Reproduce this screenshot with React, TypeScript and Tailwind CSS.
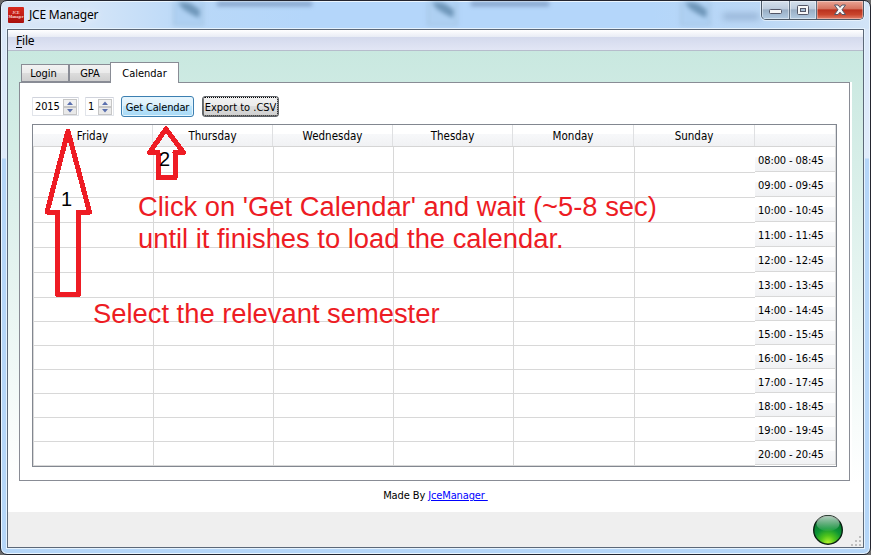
import type { ReactNode } from "react";

const DAYS: [string, string][] = [
  ["Friday", "w-[120px]"],
  ["Thursday", "w-[120px]"],
  ["Wednesday", "w-[120px]"],
  ["Thesday", "w-[120px]"],
  ["Monday", "w-[121px]"],
  ["Sunday", "w-[121px]"],
];

const HOURS = ["08", "09", "10", "11", "12", "13", "14", "15", "16", "17", "18", "19", "20"];

function rowHeight(index: number) {
  if (index === 0) return "h-[26px]";
  return index < 6 ? "h-[25px]" : "h-[24px]";
}

function AppIcon() {
  return (
    <svg width="16" height="16" viewBox="0 0 16 16" className="shrink-0">
      <defs>
        <linearGradient id="appRed" x1="0" y1="0" x2="0" y2="1">
          <stop offset="0" stopColor="#d8291c" />
          <stop offset="1" stopColor="#a80f0c" />
        </linearGradient>
      </defs>
      <rect width="16" height="16" rx="1" fill="url(#appRed)" />
      <text x="8" y="7" fontSize="4" textAnchor="middle" fill="#fbd9d4" fontFamily="Liberation Serif, serif" fontWeight="bold">JCE</text>
      <text x="8" y="11" fontSize="4" textAnchor="middle" fill="#fbd9d4" fontFamily="Liberation Serif, serif" fontWeight="bold" textLength="15">Manager</text>
    </svg>
  );
}

function BlurredFile({ className }: { className: string }) {
  return (
    <svg width="40" height="26" viewBox="0 0 40 26" className={`blur-[2px] ${className}`}>
      <rect x="4" y="-6" width="29" height="29" fill="#aed0f2" stroke="#9dbcd8" />
      <path d="M6 -2 L13 7 L21 12 L29 16 L30 8 L20 1 Z" fill="#6f97ba" />
    </svg>
  );
}

function WindowButtons() {
  return (
    <div className="absolute right-[6px] top-0 flex h-[19px] w-[103px] overflow-hidden rounded-b-[5px] border border-t-0 border-[#4c5967] shadow-[0_0_0_1px_rgba(255,255,255,0.5)]">
      <div className="flex w-[28px] items-center justify-center border-r border-[#5f6f80] bg-[linear-gradient(#d5e0ec_0%,#bccbdc_46%,#98adc3_48%,#b2cbe2_100%)] shadow-[inset_0_0_0_1px_rgba(255,255,255,0.45)]">
        <svg width="13" height="6" viewBox="0 0 13 6" className="relative top-[2px]">
          <rect x="0.5" y="0.5" width="12" height="4" rx="1" fill="#f7f7f7" stroke="#535666" />
        </svg>
      </div>
      <div className="flex w-[27px] items-center justify-center border-r border-[#5f6f80] bg-[linear-gradient(#d5e0ec_0%,#bccbdc_46%,#98adc3_48%,#b2cbe2_100%)] shadow-[inset_0_0_0_1px_rgba(255,255,255,0.45)]">
        <svg width="12" height="10" viewBox="0 0 12 10">
          <rect x="0.5" y="0.5" width="11" height="9" rx="1" fill="#f7f7f7" stroke="#535666" />
          <rect x="3.5" y="3.5" width="5" height="3" fill="#a9bfd5" stroke="#535666" />
        </svg>
      </div>
      <div className="flex flex-1 items-center justify-center bg-[linear-gradient(#e9a596_0%,#d4705c_46%,#b9301d_48%,#c9452c_75%,#e2806a_100%)] shadow-[inset_0_0_0_1px_rgba(255,255,255,0.35)]">
        <svg width="14" height="12" viewBox="0 0 14 12">
          <path d="M1.5 1 H5 L7 3.4 L9 1 H12.5 L9 5.8 L12.5 10.5 H9 L7 8.2 L5 10.5 H1.5 L5 5.8 Z" fill="#f8f8f8" stroke="#535666" />
        </svg>
      </div>
    </div>
  );
}

function Spin({ value, width }: { value: string; width: string }) {
  return (
    <div className={`flex h-[19px] items-center justify-between rounded-[1px] border border-[#e1e4ea] border-t-[#d0d3dc] bg-white pl-[2px] pr-[1px] ${width}`}>
      <span className="pt-[2px] text-[11px] tracking-[-0.15px]">{value}</span>
      <svg width="14" height="16" viewBox="0 0 14 16" className="shrink-0">
        <rect x="0.5" y="0.5" width="13" height="7" fill="#f1f1f1" stroke="#c6c6c6" />
        <rect x="0.5" y="8.5" width="13" height="7" fill="#e9e9e9" stroke="#c6c6c6" />
        <path d="M4 6 L7 2.6 L10 6 Z" fill="#5b70ae" />
        <path d="M4 10 L7 13.4 L10 10 Z" fill="#5b70ae" />
      </svg>
    </div>
  );
}

function Tab({ children, className }: { children: ReactNode; className: string }) {
  return (
    <div className={`flex items-center justify-center border border-[#898c95] text-[11px] ${className}`}>{children}</div>
  );
}

function StatusLight() {
  return (
    <svg width="32" height="32" viewBox="0 0 32 32">
      <defs>
        <radialGradient id="orb" cx="0.5" cy="0.95" r="0.85">
          <stop offset="0" stopColor="#b4f52c" />
          <stop offset="0.3" stopColor="#50c41c" />
          <stop offset="0.6" stopColor="#0c9434" />
          <stop offset="1" stopColor="#05702f" />
        </radialGradient>
        <linearGradient id="gloss" x1="0" y1="0" x2="0" y2="1">
          <stop offset="0" stopColor="#ffffff" stopOpacity="0.7" />
          <stop offset="1" stopColor="#ffffff" stopOpacity="0.03" />
        </linearGradient>
      </defs>
      <circle cx="16" cy="16" r="14.3" fill="url(#orb)" stroke="#0b2012" strokeWidth="1.4" />
      <ellipse cx="16" cy="9.5" rx="11.5" ry="7.8" fill="url(#gloss)" />
    </svg>
  );
}

function Grip() {
  const dots = [[8, 0], [4, 4], [8, 4], [0, 8], [4, 8], [8, 8]];
  return (
    <svg width="10" height="10" viewBox="0 0 10 10" className="absolute bottom-[1px] right-[2px]" shapeRendering="crispEdges">
      {dots.map(([x, y]) => (
        <rect key={`${x}-${y}`} x={x} y={y} width="2" height="2" fill="#bfbfbf" />
      ))}
    </svg>
  );
}

function Calendar() {
  return (
    <div className="mt-[7px] h-[343px] w-[805px] border border-[#828790] bg-white text-[11px]">
      <div className="flex h-[22px] border-b border-[#d5d5d5] bg-[linear-gradient(#ffffff_0%,#ffffff_42%,#f7f8fa_44%,#f1f2f4_100%)] text-[11.5px]">
        {DAYS.map(([day, width]) => (
          <div key={day} className={`flex items-center justify-center border-r border-[#dfe0e2] pt-[3px] ${width}`}>{day}</div>
        ))}
        <div className="flex-1 border-r border-[#dfe0e2]" />
      </div>
      <div className="flex">
        <div className="w-[722px] overflow-hidden border-l border-[#d8d8d8]">
          {HOURS.map((hour, index) => (
            <div key={hour} className={`flex border-b border-[#d8d8d8] ${rowHeight(index)}`}>
              {DAYS.map(([day, width]) => (
                <div key={day} className={`shrink-0 border-r border-[#d8d8d8] last:border-r-0 ${width}`} />
              ))}
            </div>
          ))}
        </div>
        <div className="w-[81px]">
          {HOURS.map((hour, index) => (
            <div
              key={hour}
              className={`flex items-center whitespace-nowrap border-b border-r border-[#d8d8d8] bg-[linear-gradient(#ffffff_0%,#ffffff_42%,#f7f8fa_44%,#f1f2f4_100%)] pl-[3px] tracking-[-0.1px] ${index < 6 ? "h-[25px] pt-[4px]" : "h-[24px] pt-[6px]"}`}
            >
              {hour}:00 - {hour}:45
            </div>
          ))}
        </div>
      </div>
    </div>
  );
}

function Annotations() {
  return (
    <div className="pointer-events-none absolute inset-0 font-['Liberation_Sans',Arial,sans-serif]">
      <svg width="871" height="555" viewBox="0 0 871 555" className="absolute inset-0" fill="none" stroke="#ee1c24" strokeWidth="5" strokeLinejoin="round" shapeRendering="crispEdges">
        <path d="M68 131 L47 212 H57.5 V294.5 H78.5 V212 H89.5 Z" />
        <path d="M166 129 L149.500 152.500 H158 V177.500 H175 V152.500 H183.500 Z" />
      </svg>
      <div className="absolute left-[61px] top-[188px] text-[20px] leading-[23px] text-black">1</div>
      <div className="absolute left-[159px] top-[148px] text-[20px] leading-[23px] text-black">2</div>
      <div className="absolute left-[138px] top-[191px] whitespace-nowrap text-[27.35px] leading-[32px] text-[#ed1c24]">
        Click on 'Get Calendar' and wait (~5-8 sec)
        <br />
        until it finishes to load the calendar.
      </div>
      <div className="absolute left-[93px] top-[298px] whitespace-nowrap text-[27.35px] leading-[32px] text-[#ed1c24]">Select the relevant semester</div>
    </div>
  );
}

export default function App() {
  return (
    <div className="relative h-[555px] w-[871px] overflow-hidden bg-[#6b6b6b] font-['DejaVu_Sans_Condensed','DejaVu_Sans',sans-serif] text-[11px] text-black [font-stretch:condensed]">
      <div className="relative flex h-[555px] w-[871px] flex-col overflow-hidden rounded-[7px] border border-[#23252f] bg-[linear-gradient(#d8e6f8_0px,#dfebfa_157px,#b5d6f8_158px,#b5d6f8_100%)] px-[6px] pb-[6px] shadow-[inset_0_0_0_1px_#eaf5fe]">
        <div className="absolute left-[1px] right-[1px] top-[1px] h-[27px] bg-[linear-gradient(90deg,#d9e6f6_0%,#d4e5f8_10%,#b9d8f8_22%,#b4d6fa_35%,#b4d6fa_75%,#bcd8f5_88%,#d2e4f7_100%)]" />
        <BlurredFile className="absolute left-[169px] top-[1px]" />
        <BlurredFile className="absolute left-[423px] top-[1px]" />
        <BlurredFile className="absolute left-[676px] top-[1px]" />
        <div className="absolute left-[216px] top-[1px] h-[4px] w-[95px] bg-[#7f9dc4] blur-[2px]" />
        <div className="absolute left-[470px] top-[1px] h-[4px] w-[78px] bg-[#7f9dc4] blur-[2px]" />
        <div className="absolute left-[722px] top-[12px] h-[7px] w-[36px] bg-[#99b6d8] blur-[3px]" />
        <WindowButtons />
        <div className="relative flex h-[28px] items-center gap-[5px] pl-[1px] font-['Noto_Sans',sans-serif] text-[12px]">
          <AppIcon />
          <span className="tracking-[-0.2px] [text-shadow:0_0_8px_#fff]">JCE Manager</span>
        </div>
        <div className="relative flex min-h-0 flex-1 flex-col border border-[#5c6878] shadow-[0_0_0_1px_#e5f2fd]">
          <div className="flex h-[21px] shrink-0 items-center border-b border-[#b6bccc] bg-[linear-gradient(#ffffff_0px,#e8ecf5_7px,#d4daed_7.500px,#e2e6f5_20px)] pl-[8px] pt-[1px] font-['Noto_Sans',sans-serif] text-[12px] tracking-[-0.2px]">
            <span><span className="underline underline-offset-2">F</span>ile</span>
          </div>
          <div className="flex h-[461px] shrink-0 flex-col bg-[linear-gradient(#c9e8e0,#ffffff_94%)] px-[11px] pt-[10px]">
            <div className="relative z-10 flex h-[21px] items-end pl-[2px]">
              <Tab className="h-[18px] w-[48px] bg-[linear-gradient(#f2f2f2_0%,#ebebeb_48%,#dddddd_50%,#cfcfcf_100%)] pr-[3px] pt-[3px]">Login</Tab>
              <Tab className="h-[18px] w-[41px] border-r-0 bg-[linear-gradient(#f2f2f2_0%,#ebebeb_48%,#dddddd_50%,#cfcfcf_100%)] pt-[3px]">GPA</Tab>
              <Tab className="-mb-px h-[21px] w-[69px] border-b-0 bg-white pt-[2px]">Calendar</Tab>
            </div>
            <div className="h-[399px] w-[831px] border border-[#898c95] bg-white pl-[12px] pt-[13px] shadow-[2px_0_0_#ffffff]">
              <div className="flex h-[21px] items-center">
                <Spin value="2015" width="w-[47px]" />
                <div className="w-[6px]" />
                <Spin value="1" width="w-[29px]" />
                <div className="ml-[7px] flex h-[21px] w-[73px] items-center justify-center whitespace-nowrap rounded-[3px] border border-[#3c7fb1] bg-[linear-gradient(#eaf6fd_0%,#d9f0fc_48%,#bee6fd_50%,#a7d9f5_100%)] pt-[3px] tracking-[-0.15px] shadow-[inset_0_0_0_1px_#e4f5fd]">Get Calendar</div>
                <div className="ml-[8px] flex h-[21px] w-[77px] items-center justify-center whitespace-nowrap rounded-[3px] border border-[#60646a] bg-[linear-gradient(#f2f2f2_0%,#ebebeb_48%,#dddddd_50%,#cfcfcf_100%)] pt-[3px] outline-1 -outline-offset-2 outline-dotted outline-black">Export to .CSV</div>
              </div>
              <Calendar />
            </div>
            <div className="flex h-[31px] items-center justify-center tracking-[-0.12px]">
              Made By&nbsp;<a className="text-[#0000ff] underline">JceManager&nbsp;</a>
            </div>
          </div>
          <div className="relative flex flex-1 items-center justify-end bg-[#efefef] pr-[19px]">
            <StatusLight />
            <Grip />
          </div>
        </div>
      </div>
      <Annotations />
    </div>
  );
}
